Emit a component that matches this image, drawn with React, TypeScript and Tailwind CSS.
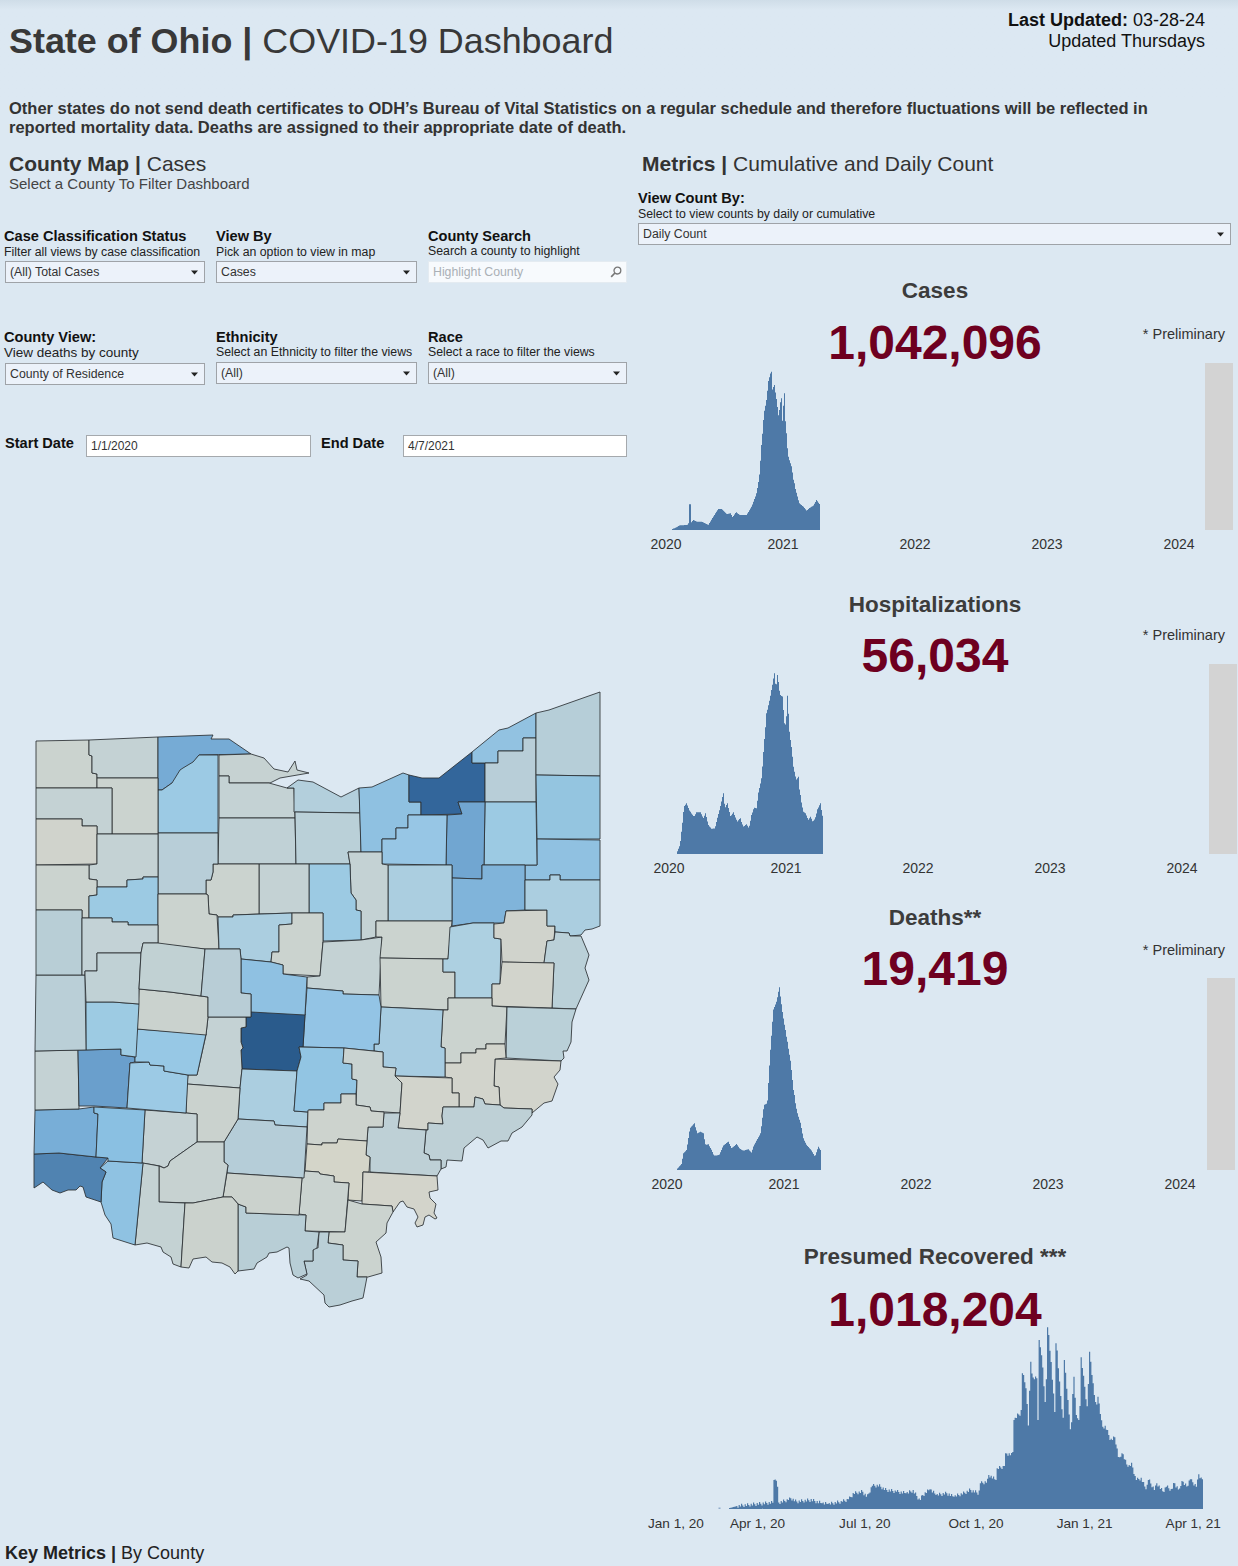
import React from "react";

type Pt = [number, number];

const counties: [string, string][] = [
  ["#cbd3cf", "36,741 89,740 89,755 92,756 92,773 97,774 97,788 36,788"],
  ["#c4d2d4", "89,740 158,737 158,778 97,778 97,774 92,773 92,756 89,755"],
  ["#76abd5", "158,737 213,735 211,739 229,739 251,754 199,755 193,763 183,769 180,780 172,783 162,790 158,790"],
  ["#9ccae4", "158,790 162,790 172,783 180,770 183,768 193,762 199,755 218,755 218,833 158,833"],
  ["#c6d2d2", "219,755 251,754 264,758 274,769 288,772 295,761 297,770 309,773 280,778 270,783 229,783 229,776 219,776"],
  ["#c4d2d4", "219,776 229,776 229,783 269,783 287,788 294,788 295,818 219,818"],
  ["#b3cfdc", "287,788 298,780 313,782 341,797 359,788 360,813 294,812 294,788"],
  ["#c0d1d6", "219,818 295,818 296,864 218,864"],
  ["#bad0d8", "295,812 360,813 361,852 348,852 350,864 296,864"],
  ["#8fc1e1", "359,788 372,787 403,773 409,775 409,802 421,802 421,815 408,815 408,828 396,828 396,839 382,839 382,852 361,852"],
  ["#33669b", "409,775 422,778 439,778 472,752 472,763 485,763 485,802 458,802 462,814 421,815 421,802 409,802"],
  ["#92c2e1", "472,752 499,730 508,728 536,713 536,738 523,738 523,751 498,751 498,763 472,763"],
  ["#b8ced8", "485,763 498,763 498,751 523,751 523,738 536,738 536,802 485,802"],
  ["#b6ced8", "536,713 549,710 600,692 600,776 536,775"],
  ["#94c5e0", "536,775 600,776 600,839 537,839"],
  ["#90c1e1", "537,839 600,840 600,880 560,880 560,875 550,875 550,880 525,880 525,865 537,865"],
  ["#9ccae3", "485,802 536,802 537,865 484,865"],
  ["#71a6d1", "458,802 485,802 484,865 482,865 482,879 452,878 452,865 446,865 447,815 462,814"],
  ["#97c6e5", "408,815 447,815 446,865 382,864 382,839 396,839 396,828 408,828"],
  ["#80b4da", "452,878 482,879 482,865 525,865 525,910 506,911 504,923 473,923 452,926"],
  ["#abcee0", "388,865 452,865 452,921 388,921"],
  ["#c4d2d4", "348,852 382,852 382,864 388,865 388,921 376,921 376,937 361,940 361,911 356,910 356,900 351,893 350,864"],
  ["#9ccae3", "309,864 350,864 351,893 356,900 356,910 361,911 361,940 323,941 323,913 309,913"],
  ["#c4d2d4", "259,864 309,864 309,913 292,913 259,914"],
  ["#cbd3cf", "213,864 259,864 259,914 233,915 233,917 218,917 217,915 209,914 208,895 206,894 206,880 211,880 213,872"],
  ["#b8ced8", "158,833 218,833 218,864 213,864 213,872 211,880 206,880 206,894 158,894"],
  ["#cbd3cf", "97,778 158,778 158,834 112,834 112,788 97,788"],
  ["#c4d2d4", "36,788 112,788 112,834 97,834 97,826 82,826 82,819 36,819"],
  ["#d0d3cc", "36,819 82,819 82,826 97,826 97,864 36,865"],
  ["#c4d2d4", "97,834 158,834 158,877 143,877 143,879 127,880 127,887 97,887 97,880 89,879 89,865 97,864"],
  ["#cbd3cf", "36,865 89,865 89,879 97,880 97,895 89,896 89,918 82,918 82,910 36,910"],
  ["#9ccae3", "97,887 127,887 127,880 143,879 143,877 158,877 158,925 128,925 128,922 112,922 112,918 89,918 89,896 97,895"],
  ["#cbd3cf", "158,894 206,894 208,895 209,914 217,915 219,949 205,949 158,944"],
  ["#abcee0", "218,917 233,917 233,915 292,913 292,924 279,925 279,952 272,952 271,962 241,959 240,949 219,949"],
  ["#cbd3cf", "292,913 323,913 323,941 320,976 283,974 283,965 271,962 272,952 279,952 279,925 292,924"],
  ["#c4d2d4", "323,942 361,940 382,937 379,995 343,994 343,991 307,988 307,977 320,976"],
  ["#cbd3cf", "376,921 452,921 448,959 380,958 382,937 376,937"],
  ["#cbd3cf", "380,958 443,959 443,972 455,972 455,998 448,998 448,1010 381,1007"],
  ["#add0e1", "450,927 473,923 494,923 494,938 501,939 500,984 492,984 492,998 455,998 455,972 443,972 443,959 448,959"],
  ["#d0d3cc", "494,924 504,923 506,911 547,910 547,926 555,926 554,940 547,941 544,963 502,962 501,939 494,938"],
  ["#abcee0", "525,880 550,880 550,875 560,875 560,880 600,880 600,926 592,929 585,930 581,935 570,936 569,933 555,932 555,926 547,926 547,910 525,910"],
  ["#bad0d8", "555,932 569,933 570,936 581,936 589,955 585,968 589,980 580,1000 576,1009 552,1008 554,963 544,963 547,941 554,940"],
  ["#d2d4cc", "502,962 554,963 552,1008 492,1006 492,984 500,984"],
  ["#cbd3cf", "448,998 492,998 492,1006 507,1007 505,1044 486,1044 486,1049 476,1049 476,1053 461,1053 461,1063 445,1063 445,1048 441,1047 443,1010 448,1010"],
  ["#bad0d8", "507,1007 576,1009 572,1022 571,1042 567,1051 563,1051 564,1058 561,1061 506,1058"],
  ["#d2d4cc", "495,1059 561,1061 560,1070 554,1077 558,1084 552,1101 544,1103 532,1113 532,1109 504,1108 500,1105 499,1087 494,1086"],
  ["#d2d4cc", "445,1063 461,1063 461,1053 476,1053 476,1049 486,1049 486,1044 505,1044 506,1058 495,1059 494,1086 499,1087 500,1105 485,1104 483,1099 475,1097 474,1107 459,1107 459,1093 452,1093 452,1078 445,1077"],
  ["#a7cce1", "381,1007 443,1010 441,1047 445,1048 445,1077 395,1076 396,1068 383,1067 383,1052 374,1051 374,1044 379,1044"],
  ["#93c4e5", "307,988 343,991 343,994 379,995 381,1007 379,1044 374,1044 374,1051 344,1048 303,1047 305,1015"],
  ["#2a5b8c", "251,1011 305,1014 303,1047 299,1047 301,1057 297,1071 242,1069 241,1050 243,1048 241,1042 241,1028 246,1027 246,1017 251,1017"],
  ["#c4d2d4", "208,1017 246,1017 246,1027 241,1028 241,1042 243,1048 241,1050 242,1069 240,1088 187,1084 188,1075 197,1075 206,1035"],
  ["#8fc1e2", "241,959 271,962 283,965 283,974 307,977 305,1015 251,1012 251,994 241,993"],
  ["#abcee0", "242,1069 297,1071 294,1111 308,1112 307,1127 275,1125 274,1121 238,1119 240,1088"],
  ["#92c5e3", "299,1047 344,1048 343,1063 352,1064 352,1079 357,1080 356,1094 341,1094 341,1103 324,1103 324,1110 309,1110 308,1112 294,1111 297,1071 301,1057"],
  ["#c9d3d1", "344,1048 383,1052 383,1067 396,1068 395,1076 402,1083 400,1113 371,1111 370,1107 356,1105 357,1080 352,1079 352,1064 343,1063"],
  ["#d2d4cc", "395,1076 452,1078 452,1093 459,1093 459,1107 443,1107 442,1116 443,1124 428,1123 428,1130 398,1128 400,1113 402,1083"],
  ["#bed0d6", "443,1107 474,1107 475,1097 483,1099 485,1104 500,1105 504,1108 532,1109 532,1115 522,1127 512,1133 508,1141 501,1141 488,1148 483,1140 477,1137 464,1148 462,1161 447,1160 446,1167 441,1169 441,1160 430,1160 429,1155 424,1153 426,1130 428,1130 428,1123 443,1124 442,1116"],
  ["#bed0d6", "384,1113 400,1113 398,1128 426,1130 424,1153 429,1155 430,1160 441,1160 441,1169 437,1176 370,1172 370,1157 366,1155 368,1127 383,1127"],
  ["#cdd3ce", "308,1110 324,1110 324,1103 341,1103 341,1094 356,1094 356,1105 370,1107 371,1111 384,1112 383,1127 368,1127 367,1141 338,1139 337,1143 322,1143 322,1145 307,1144"],
  ["#d4d5c9", "307,1144 322,1145 322,1143 337,1143 338,1139 367,1141 366,1155 370,1157 369,1172 363,1172 362,1201 348,1200 349,1183 334,1182 334,1176 320,1174 319,1172 305,1171"],
  ["#d3d4cb", "363,1172 437,1176 438,1190 429,1192 430,1198 436,1204 434,1213 437,1218 435,1219 429,1215 425,1217 423,1225 417,1227 415,1223 418,1217 414,1209 407,1207 403,1201 400,1202 393,1212 392,1206 362,1204"],
  ["#cad3d0", "305,1171 319,1172 320,1174 334,1176 334,1182 349,1183 345,1232 305,1231 306,1215 299,1214 302,1178"],
  ["#cbd3cf", "348,1200 362,1204 392,1206 393,1212 387,1223 386,1233 376,1242 381,1257 382,1273 368,1277 357,1277 358,1261 343,1260 343,1245 328,1243 329,1232 345,1232"],
  ["#bacfd7", "319,1232 329,1232 328,1243 343,1245 343,1260 358,1261 357,1277 367,1277 363,1298 352,1301 340,1305 329,1307 325,1303 324,1295 309,1281 300,1279 307,1275 304,1261 313,1261 313,1248 318,1248"],
  ["#b8ced6", "238,1204 246,1207 246,1213 306,1215 305,1231 319,1232 317,1248 313,1250 313,1261 304,1261 307,1274 298,1278 293,1275 290,1263 289,1248 287,1247 277,1252 269,1253 267,1257 257,1263 254,1269 238,1271"],
  ["#b5cdd8", "238,1119 274,1121 275,1125 307,1127 304,1178 227,1173 228,1165 224,1162 224,1142"],
  ["#cbd2cd", "227,1173 302,1178 299,1215 246,1213 246,1207 238,1204 232,1197 223,1197"],
  ["#cad2ce", "187,1084 240,1088 238,1119 224,1142 197,1142 197,1114 186,1113"],
  ["#c5d2d4", "145,1110 186,1113 197,1114 197,1142 170,1161 168,1166 164,1168 160,1166 142,1163"],
  ["#c7d2d1", "197,1142 224,1142 224,1162 228,1165 223,1197 193,1203 159,1202 159,1166 164,1168 168,1166 170,1161"],
  ["#c4d2d3", "143,1163 159,1166 159,1202 185,1203 181,1267 173,1264 171,1257 163,1252 161,1247 147,1243 135,1245"],
  ["#cbd2cd", "185,1203 193,1203 223,1197 232,1197 238,1204 238,1271 235,1274 230,1267 222,1263 212,1262 206,1257 193,1259 189,1268 181,1267"],
  ["#8fc2e2", "108,1161 143,1163 135,1245 113,1238 111,1224 105,1215 101,1202 102,1182 106,1172 100,1168"],
  ["#5083b1", "34,1154 59,1153 96,1157 108,1158 100,1168 106,1172 102,1182 101,1202 86,1197 83,1187 80,1186 76,1190 68,1190 60,1193 52,1190 43,1182 34,1188"],
  ["#78aed7", "35,1110 79,1109 94,1107 94,1113 98,1114 96,1157 59,1153 34,1154"],
  ["#8ac0e2", "94,1107 145,1110 142,1163 108,1161 108,1158 96,1157 98,1114 94,1113"],
  ["#c4d2d4", "35,1051 78,1050 79,1109 35,1110"],
  ["#6a9fcc", "78,1050 121,1049 121,1055 135,1057 135,1062 130,1063 127,1108 94,1106 79,1106"],
  ["#9ccae5", "130,1063 149,1062 150,1065 164,1066 164,1071 188,1075 186,1113 127,1108"],
  ["#97c8e5", "137,1029 206,1034 197,1075 188,1075 164,1071 164,1066 150,1065 149,1062 135,1062 135,1057"],
  ["#cad2ce", "139,989 170,992 208,997 208,1017 206,1035 137,1029"],
  ["#9dcbe3", "86,1002 113,1002 139,1004 136,1057 121,1055 121,1049 86,1050"],
  ["#bacfd7", "36,975 85,975 86,1050 35,1051"],
  ["#b8ced6", "36,910 82,910 82,975 36,975"],
  ["#c3d2d6", "82,918 112,918 112,922 128,922 128,925 158,925 158,943 143,943 141,953 97,953 97,971 85,971 85,975 82,975"],
  ["#c0d1d5", "97,953 141,953 139,989 139,1004 113,1002 86,1002 85,975 85,971 97,971"],
  ["#c1d1d3", "143,943 158,943 205,949 201,996 170,992 139,989 141,953"],
  ["#b8cdd6", "205,949 240,949 241,959 241,993 251,994 251,1017 208,1017 208,997 201,996"],
];

const cases: Pt[] = [[95,508],[107,503],[120,496],[142,495],[146,490],[147,433],[151,433],[152,490],[160,480],[170,485],[185,485],[205,495],[220,470],[235,447],[245,447],[260,462],[272,460],[278,472],[288,457],[300,465],[320,465],[335,440],[350,400],[358,350],[365,255],[372,160],[380,120],[385,65],[393,35],[397,90],[403,75],[410,120],[416,170],[423,115],[427,190],[433,100],[438,220],[445,290],[455,320],[462,370],[470,400],[478,430],[490,440],[500,452],[510,443],[520,437],[530,420],[538,432]];
const hosp: Pt[] = [[110,565],[120,540],[125,500],[132,425],[140,415],[150,440],[162,455],[170,442],[182,442],[190,460],[197,445],[205,480],[215,492],[225,490],[232,460],[240,430],[250,385],[255,430],[262,415],[272,455],[280,442],[292,470],[300,460],[310,485],[320,478],[327,490],[335,450],[342,428],[350,430],[355,385],[365,340],[372,240],[380,145],[388,110],[395,75],[403,25],[408,70],[413,30],[420,90],[428,95],[433,175],[438,180],[443,92],[448,200],[455,250],[462,320],[470,345],[475,335],[480,390],[490,440],[497,445],[505,465],[512,455],[518,470],[525,462],[533,433],[541,415],[548,455]];
const deaths: Pt[] = [[110,568],[125,552],[130,520],[140,510],[150,445],[163,430],[172,460],[182,455],[190,460],[197,495],[205,493],[215,510],[222,527],[238,525],[250,497],[265,485],[275,505],[290,492],[300,507],[310,512],[325,508],[335,518],[340,500],[350,482],[362,460],[372,375],[382,370],[390,230],[400,90],[410,65],[418,22],[428,100],[436,150],[442,185],[452,245],[462,345],[472,400],[482,430],[490,475],[500,495],[515,512],[525,530],[535,500],[541,510]];
const recovered: Pt[] = [[85,565],[110,558],[170,552],[212,548],[218,548],[220,480],[226,482],[228,500],[232,548],[260,540],[270,535],[285,545],[330,540],[360,550],[380,552],[420,545],[440,538],[455,520],[480,515],[495,530],[510,497],[530,497],[550,510],[580,515],[610,520],[630,512],[650,540],[660,525],[680,508],[700,525],[730,520],[750,530],[780,520],[800,510],[825,520],[830,490],[850,485],[855,465],[875,480],[880,445],[900,440],[905,400],[925,405],[930,300],[940,285],[950,280],[955,160],[965,205],[972,320],[978,125],[985,175],[995,175],[1000,300],[1005,60],[1015,150],[1022,260],[1030,22],[1040,140],[1050,280],[1055,70],[1065,205],[1075,300],[1078,120],[1088,240],[1098,348],[1105,170],[1115,300],[1123,300],[1128,112],[1138,200],[1146,265],[1153,95],[1163,190],[1172,265],[1178,230],[1190,320],[1200,320],[1215,360],[1228,352],[1240,420],[1250,400],[1265,440],[1278,433],[1290,480],[1305,475],[1320,508],[1328,480],[1345,510],[1352,490],[1370,515],[1380,500],[1395,510],[1403,490],[1420,512],[1425,483],[1440,500],[1450,478],[1470,500],[1475,463],[1485,478]];

function barPath(pts: Pt[], ox: number, oy: number, base: number, step: number, xk = 1 / 3, textured = false): string {
  const page = pts.map(([x, y]) => [x * xk + ox, y / 3 + oy] as Pt);
  const x0 = Math.round(page[0][0]);
  const x1 = page[page.length - 1][0];
  let d = "";
  let j = 0;
  let i = 0;
  for (let x = x0; x < x1; x += step, i++) {
    const c = x + step / 2;
    while (j < page.length - 2 && page[j + 1][0] < c) j++;
    const [ax, ay] = page[j];
    const [bx, by] = page[j + 1];
    const t = Math.max(0, Math.min(1, (c - ax) / (bx - ax)));
    let y = ay + (by - ay) * t;
    if (textured && y < base - 3) y += ((i * 7) % 5) * 0.9 - 1.8;
    for (const p of page) {
      if (p[0] >= x && p[0] < x + step) y = Math.min(y, p[1]);
    }
    let w = step;
    if (textured) {
      const m = (((x - 1015) % 19.2) + 19.2) % 19.2;
      if (m < 0.7) w = step * 0.55;
    }
    d += `M${x.toFixed(2)} ${base}H${(x + w).toFixed(2)}V${y.toFixed(1)}H${x.toFixed(2)}Z`;
  }
  return d;
}

const Caret = () => (
  <svg width="7" height="5" viewBox="0 0 7 5" className="shrink-0">
    <path d="M0 0.5H7L3.5 4.5Z" fill="#222" />
  </svg>
);

function Filter({
  label,
  sub,
  value,
  cls,
  subCls,
  kind,
}: {
  label: string;
  sub: string;
  value: string;
  cls: string;
  subCls: string;
  kind?: "search";
}) {
  return (
    <div>
      <div className="h-4 text-[14.6px] leading-4 font-bold text-[#111] whitespace-nowrap">{label}</div>
      <div className={`text-[#222] whitespace-nowrap ${subCls}`}>{sub}</div>
      {kind === "search" ? (
        <div className={`h-[22px] flex items-center justify-between pl-[4px] pr-[4px] bg-[#f7fafd] border border-[#e4ebf1] text-[12.3px] text-[#aab0b6] ${cls}`}>
          <span>{value}</span>
          <svg width="12" height="12" viewBox="0 0 12 12" fill="none" stroke="#777" strokeWidth="1.3">
            <circle cx="7.4" cy="4.6" r="3.4" />
            <path d="M4.9 7L1.2 10.8" strokeWidth="1.7" />
          </svg>
        </div>
      ) : (
        <div className={`h-[22px] flex items-center justify-between pl-[4px] pr-[6px] bg-[#ecf2fa] border border-[#9fa3a8] text-[12.3px] text-[#333] ${cls}`}>
          <span>{value}</span>
          <Caret />
        </div>
      )}
    </div>
  );
}

function Metric({
  title,
  value,
  titleCls,
  boxCls,
  prelimCls,
  chartH,
  top,
  path,
  barCls,
  labelCls,
}: {
  title: string;
  value: string;
  titleCls: string;
  boxCls: string;
  prelimCls: string;
  chartH: number;
  top: number;
  path: string;
  barCls: string;
  labelCls: string;
}) {
  return (
    <section className={titleCls}>
      <div className="h-[30px] pt-px text-center text-[22.5px] leading-[30px] font-bold text-[#3c3c3c]">{title}</div>
      <div className={`relative text-center ${boxCls}`}>
        <div className="text-[48px] leading-[52px] font-bold text-[#6e0020]">{value}</div>
        <div className={`absolute right-[13px] text-[14.5px] leading-4 text-[#333] ${prelimCls}`}>* Preliminary</div>
      </div>
      <div className="flex justify-between relative">
        <svg width="560" height={chartH} viewBox={`632 ${top} 560 ${chartH}`} className="block shrink-0">
          <path d={path} fill="#4e79a7" />
        </svg>
        <div className={`w-7 bg-[#d3d3d3] ${barCls}`} />
      </div>
      <div className={`flex gap-[100px] mt-[7px] text-[14px] leading-[14px] text-[#333] ${labelCls}`}>
        {["2020", "2021", "2022", "2023", "2024"].map((y, i) => (
          <span key={y} className={i === 0 ? "w-8 text-center mr-[-15px]" : "w-8 text-center"}>
            {y}
          </span>
        ))}
      </div>
    </section>
  );
}

export default function App() {
  const font = { fontFamily: '"Liberation Sans", Arial, sans-serif' };
  return (
    <div style={font} className="w-[1238px] h-[1566px] overflow-hidden bg-[#dce8f2] text-[#333]">
      <header className="h-[99px] flex justify-between pl-[9px] pr-[33px] bg-linear-to-b from-[#cfdde8] to-[#dce8f2] to-[10%]">
        <h1 className="pt-[19px] text-[35.9px] leading-[44px] whitespace-nowrap text-[#383838]">
          <b>State of Ohio |</b> COVID-19 Dashboard
        </h1>
        <div className="pt-[10px] text-right text-[18px] leading-[21px] text-[#111]">
          <div>
            <b>Last Updated:</b> 03-28-24
          </div>
          <div>Updated Thursdays</div>
        </div>
      </header>
      <p className="h-[52px] pl-[9px] w-[1180px] text-[16.5px] leading-[19px] font-bold text-[#333]">
        Other states do not send death certificates to ODH’s Bureau of Vital Statistics on a regular schedule and therefore fluctuations will be reflected in reported mortality data. Deaths are assigned to their appropriate date of death.
      </p>
      <div className="flex">
        <div className="w-[632px] shrink-0">
          <div className="pl-[9px] text-[21px] leading-[26px] text-[#333]">
            <b>County Map |</b> Cases
          </div>
          <div className="pl-[9px] -mt-px text-[15px] leading-4 text-[#444]">Select a County To Filter Dashboard</div>
          <div className="mt-[36px] pl-[4px] grid grid-cols-[212px_212px_204px]">
            <Filter label="Case Classification Status" sub="Filter all views by case classification" value="(All) Total Cases" cls="w-[200px] ml-px" subCls="text-[12.3px] leading-[17px]" />
            <Filter label="View By" sub="Pick an option to view in map" value="Cases" cls="w-[201px]" subCls="text-[12.3px] leading-[17px]" />
            <Filter label="County Search" sub="Search a county to highlight" value="Highlight County" cls="w-[199px]" subCls="text-[12.3px] leading-[15px] mb-[2px]" kind="search" />
          </div>
          <div className="mt-[46px] pl-[4px] grid grid-cols-[212px_212px_204px]">
            <Filter label="County View:" sub="View deaths by county" value="County of Residence" cls="w-[200px] ml-px" subCls="text-[13.5px] leading-[15px] mb-[3px]" />
            <Filter label="Ethnicity" sub="Select an Ethnicity to filter the views" value="(All)" cls="w-[201px]" subCls="text-[12.3px] leading-[15px] mb-[2px]" />
            <Filter label="Race" sub="Select a race to filter the views" value="(All)" cls="w-[199px]" subCls="text-[12.3px] leading-[15px] mb-[2px]" />
          </div>
          <div className="mt-[50px] pl-[5px] flex items-start h-[22px]">
            <b className="w-[81px] text-[14.6px] leading-4 text-[#111]">Start Date</b>
            <div className="w-[225px] h-[22px] bg-white border border-[#a5a9ad] pl-[4px] text-[12px] leading-5 text-[#333]">1/1/2020</div>
            <b className="ml-[10px] w-[82px] text-[14.6px] leading-4 text-[#111]">End Date</b>
            <div className="w-[224px] h-[22px] bg-white border border-[#a5a9ad] pl-[4px] text-[12px] leading-5 text-[#333]">4/7/2021</div>
          </div>
          <svg width="632" height="640" viewBox="0 680 632 640" className="block mt-[223px]">
            {counties.map(([c, p], i) => (
              <polygon key={i} points={p} fill={c} stroke="#2a2f33" strokeWidth="0.85" strokeLinejoin="round" />
            ))}
          </svg>
          <div className="mt-[221px] pl-[5px] text-[18px] leading-6 text-[#222]">
            <b>Key Metrics |</b> By County
          </div>
        </div>

        <div className="w-[606px] shrink-0">
          <div className="pl-[10px] text-[21px] leading-[26px] text-[#333]">
            <b>Metrics |</b> Cumulative and Daily Count
          </div>
          <div className="mt-[13px] pl-[6px] text-[14.6px] leading-4 font-bold text-[#111]">View Count By:</div>
          <div className="pl-[6px] text-[12.3px] leading-[17px] text-[#222]">Select to view counts by daily or cumulative</div>
          <div className="ml-[6px] w-[593px] h-[22px] flex items-center justify-between pl-[4px] pr-[6px] bg-[#ecf2fa] border border-[#9fa3a8] text-[12.3px] text-[#333]">
            <span>Daily Count</span>
            <Caret />
          </div>
          <Metric title="Cases" value="1,042,096" titleCls="mt-[30px]" boxCls="h-[58px] pt-[12px]" prelimCls="top-[21px]" chartH={167} top={363} path={barPath(cases, 640, 360, 530, 1)} barCls="mr-[5px]" labelCls="ml-[18px]" />
          <Metric title="Hospitalizations" value="56,034" titleCls="mt-[38px]" boxCls="h-[45px] pt-[11px]" prelimCls="top-[8px]" chartH={190} top={664} path={barPath(hosp, 640, 665, 854, 1)} barCls="mr-[1px]" labelCls="ml-[21px]" />
          <Metric title="Deaths**" value="19,419" titleCls="mt-[27px]" boxCls="h-[46px] pt-[11px]" prelimCls="top-[10px]" chartH={192} top={978} path={barPath(deaths, 640, 980, 1170, 1)} barCls="mr-[3px]" labelCls="ml-[19px]" />
          <section className="mt-[51px]">
            <div className="h-[30px] text-center text-[22.5px] leading-[30px] font-bold text-[#3c3c3c]">Presumed Recovered ***</div>
            <div className="h-[55px] pt-[12px] text-center text-[48px] leading-[52px] font-bold text-[#6e0020]">1,018,204</div>
            <svg width="606" height="182" viewBox="632 1327 606 182" className="block">
              <rect x="718.5" y="1507.6" width="2" height="1.2" fill="#7e9dc0" />
              <path d={barPath(recovered, 700, 1320, 1509, 1.2, 0.338, true)} fill="#4e79a7" />
            </svg>
            <div className="flex mt-[8px] text-[13.6px] leading-[14px] text-[#333] whitespace-nowrap">
              <span className="ml-[16px]">Jan 1, 20</span>
              <span className="ml-[26px]">Apr 1, 20</span>
              <span className="ml-[54px]">Jul 1, 20</span>
              <span className="ml-[58px]">Oct 1, 20</span>
              <span className="ml-[53px]">Jan 1, 21</span>
              <span className="ml-[53px]">Apr 1, 21</span>
            </div>
          </section>
        </div>
      </div>
    </div>
  );
}
